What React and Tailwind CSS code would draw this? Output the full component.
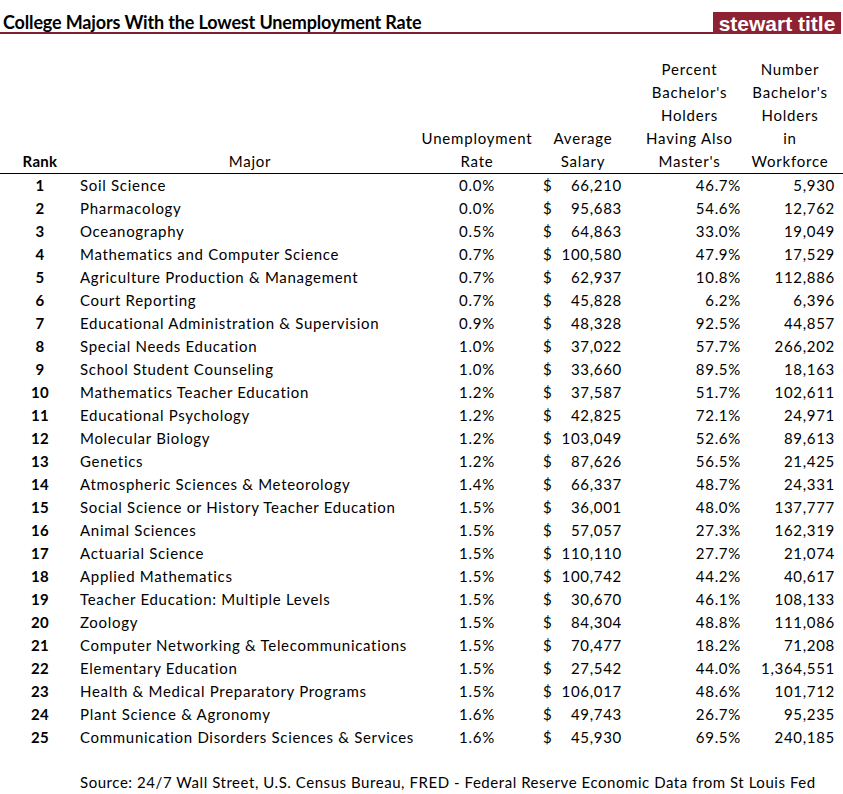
const rows = [
  [1, 'Soil Science', '0.0%', '66,210', '46.7%', '5,930'],
  [2, 'Pharmacology', '0.0%', '95,683', '54.6%', '12,762'],
  [3, 'Oceanography', '0.5%', '64,863', '33.0%', '19,049'],
  [4, 'Mathematics and Computer Science', '0.7%', '100,580', '47.9%', '17,529'],
  [5, 'Agriculture Production & Management', '0.7%', '62,937', '10.8%', '112,886'],
  [6, 'Court Reporting', '0.7%', '45,828', '6.2%', '6,396'],
  [7, 'Educational Administration & Supervision', '0.9%', '48,328', '92.5%', '44,857'],
  [8, 'Special Needs Education', '1.0%', '37,022', '57.7%', '266,202'],
  [9, 'School Student Counseling', '1.0%', '33,660', '89.5%', '18,163'],
  [10, 'Mathematics Teacher Education', '1.2%', '37,587', '51.7%', '102,611'],
  [11, 'Educational Psychology', '1.2%', '42,825', '72.1%', '24,971'],
  [12, 'Molecular Biology', '1.2%', '103,049', '52.6%', '89,613'],
  [13, 'Genetics', '1.2%', '87,626', '56.5%', '21,425'],
  [14, 'Atmospheric Sciences & Meteorology', '1.4%', '66,337', '48.7%', '24,331'],
  [15, 'Social Science or History Teacher Education', '1.5%', '36,001', '48.0%', '137,777'],
  [16, 'Animal Sciences', '1.5%', '57,057', '27.3%', '162,319'],
  [17, 'Actuarial Science', '1.5%', '110,110', '27.7%', '21,074'],
  [18, 'Applied Mathematics', '1.5%', '100,742', '44.2%', '40,617'],
  [19, 'Teacher Education: Multiple Levels', '1.5%', '30,670', '46.1%', '108,133'],
  [20, 'Zoology', '1.5%', '84,304', '48.8%', '111,086'],
  [21, 'Computer Networking & Telecommunications', '1.5%', '70,477', '18.2%', '71,208'],
  [22, 'Elementary Education', '1.5%', '27,542', '44.0%', '1,364,551'],
  [23, 'Health & Medical Preparatory Programs', '1.5%', '106,017', '48.6%', '101,712'],
  [24, 'Plant Science & Agronomy', '1.6%', '49,743', '26.7%', '95,235'],
  [25, 'Communication Disorders Sciences & Services', '1.6%', '45,930', '69.5%', '240,185'],
];

const cols = 'grid grid-cols-[80px_340px_114px_100px_111px_94px]';

const App = () => {
  return (
    <div className="w-[843px] h-[794px] bg-white text-black font-['Lato',sans-serif] overflow-hidden">
      <div className="flex items-end pt-[12px]">
        <div className="flex-1 border-b-2 border-[#7d1f2e] h-[22px] flex items-center">
          <h1 className="pl-[3px] text-[18px] font-bold leading-none tracking-[-0.15px]">College Majors With the Lowest Unemployment Rate</h1>
        </div>
        <div className="w-[128px] h-[22px] mr-[2px] bg-[#8e2232] flex items-center justify-center">
          <span className="text-white text-[21px] font-bold font-['Liberation_Sans',sans-serif] leading-none tracking-[0px]">stewart title</span>
        </div>
      </div>

      <div className={`${cols} mt-[24px] border-b border-black text-[15px] leading-[23px] tracking-[0.8px]`}>
        <div className="flex items-end justify-center font-bold tracking-[0.3px]">Rank</div>
        <div className="flex items-end justify-center">Major</div>
        <div className="flex flex-col justify-end items-center text-center">
          <span>Unemployment</span>
          <span>Rate</span>
        </div>
        <div className="flex flex-col justify-end items-center text-center pr-[2px]">
          <span>Average</span>
          <span>Salary</span>
        </div>
        <div className="flex flex-col justify-end items-center text-center">
          <span>Percent</span>
          <span>Bachelor's</span>
          <span>Holders</span>
          <span>Having Also</span>
          <span>Master's</span>
        </div>
        <div className="flex flex-col justify-end items-center text-center pr-[4px]">
          <span>Number</span>
          <span>Bachelor's</span>
          <span>Holders</span>
          <span>in</span>
          <span>Workforce</span>
        </div>
      </div>

      <div className="text-[15px] leading-[23px] tracking-[0.7px]">
        {rows.map((r) => (
          <div key={r[0]} className={cols}>
            <div className="text-center font-bold tracking-[0.3px]">{r[0]}</div>
            <div>{r[1]}</div>
            <div className="text-center">{r[2]}</div>
            <div className="flex justify-between pl-[9px] pr-[12px]">
              <span>$</span>
              <span>{r[3]}</span>
            </div>
            <div className="text-right pr-[4px]">{r[4]}</div>
            <div className="text-right pr-[4px]">{r[5]}</div>
          </div>
        ))}
      </div>

      <p className="mt-[22px] pl-[80px] text-[15px] leading-[23px] tracking-[0.55px]">
        Source: 24/7 Wall Street, U.S. Census Bureau, FRED - Federal Reserve Economic Data from St Louis Fed
      </p>
    </div>
  );
};

export default App;
